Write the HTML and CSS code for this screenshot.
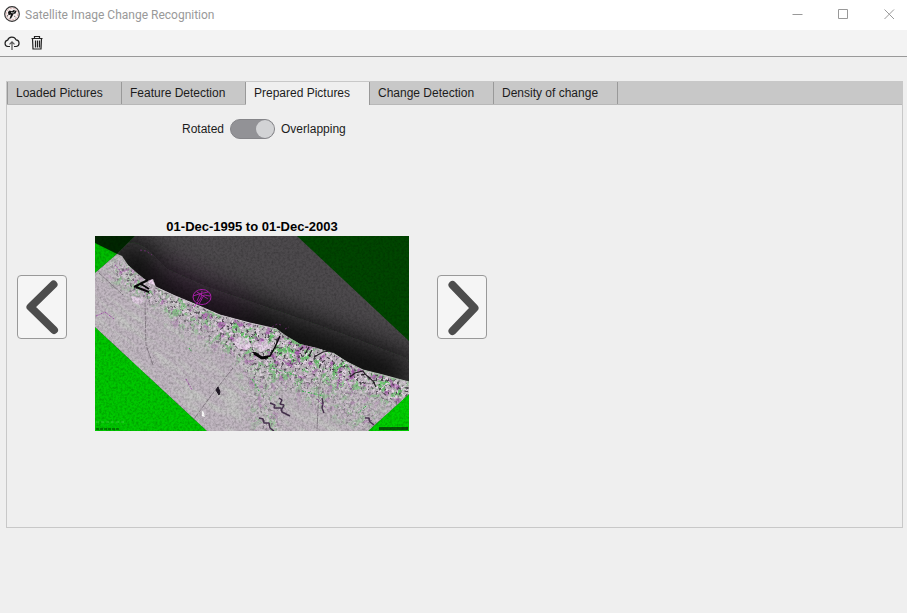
FILE: index.html
```html
<!DOCTYPE html>
<html lang="en">
<head>
<meta charset="utf-8">
<title>Satellite Image Change Recognition</title>
<link rel="stylesheet" href="styles.css">
</head>
<body>
<header class="titlebar">
  <svg class="app-icon" viewBox="0 0 16 16" aria-hidden="true">
    <circle cx="8" cy="8" r="7.3" fill="#f6eeee" stroke="#333" stroke-width="1.2"/>
    <circle cx="8" cy="8" r="5.8" fill="none" stroke="#d3a0a0" stroke-width=".8" stroke-dasharray="2 1.5"/>
    <path d="M4 6 5.500 4.500 8 5.200 9.500 4l3 1-1 2.500L9.500 8l-1 2L7 12.500l-1.500.3L7 8.500l-2.500.8z" fill="#151515"/>
    <path d="M7 6.5 9.500 7M10.500 5.500l-1 1.200" stroke="#fff" stroke-width=".7"/>
    <path d="m10 10 1.500 1M3.500 9v1.500" stroke="#777"/>
  </svg>
  <h1 class="app-title">Satellite Image Change Recognition</h1>
  <div class="window-controls">
    <button type="button" aria-label="Minimize"><svg viewBox="0 0 11 11"><path d="M.5 5.500h10"/></svg></button>
    <button type="button" aria-label="Maximize"><svg viewBox="0 0 11 11"><path d="M.5.5h9v9h-9z"/></svg></button>
    <button type="button" aria-label="Close"><svg viewBox="0 0 11 11"><path d="m.5.5 9.500 9.500M10 .5.500 10"/></svg></button>
  </div>
</header>

<div class="toolbar" role="toolbar">
  <button type="button" aria-label="Upload"><svg viewBox="0 0 16 16"><path d="M6 11.5H3.800A3.200 3.200 0 0 1 3.600 5.200 4.500 4.500 0 0 1 12 4.800a3.400 3.400 0 0 1 .4 6.700H10"/><path d="M8 15V7M5.500 9.400 8 6.900l2.500 2.500" stroke="#555"/></svg></button>
  <button type="button" aria-label="Delete"><svg viewBox="0 0 16 16"><path d="M2.500 3.500h11M5.500 3.500v-2h5v2M3.500 3.500l.5 10.500h8l.5-10.500M6.500 5.500v7M8.500 5.500v7M10.500 5.500v7"/></svg></button>
</div>

<main class="tab-panel">
  <nav class="tabs" role="tablist">
    <button type="button" role="tab">Loaded Pictures</button>
    <button type="button" role="tab">Feature Detection</button>
    <button type="button" role="tab" aria-selected="true">Prepared Pictures</button>
    <button type="button" role="tab">Change Detection</button>
    <button type="button" role="tab">Density of change</button>
  </nav>

  <section class="content">
    <div class="mode">
      <label for="overlap">Rotated</label>
      <input class="switch" id="overlap" type="checkbox" role="switch" checked>
      <label for="overlap">Overlapping</label>
    </div>

    <div class="viewer">
      <button class="step" type="button" aria-label="Previous"><svg viewBox="0 0 48 62"><path d="M35.500 8.500 12.500 31l23.500 23"/></svg></button>
      <figure class="picture">
        <figcaption>01-Dec-1995 to 01-Dec-2003</figcaption>
        <svg class="satellite" viewBox="0 0 314 195" role="img" aria-label="Overlay of two satellite images of a coast">
          <defs>
            <clipPath id="frame"><path d="M0 0h314v195H0z"/></clipPath>
            <clipPath id="sea"><path d="M40 0 22 18l5 2 6 9 9 8 10 8 9 6 17 8 24 10 23 10 30 8 27 6 8 6 15 9 17 4 16 5 14 9 16 8 20 5 26 7V105L202 0z"/></clipPath>
            <clipPath id="land"><path d="M0 37 22 18l5 2 6 9 9 8 10 8 6-2 3 8 17 8 24 10 23 10 30 8 27 6 8 6 15 9 17 4 16 5 14 9 16 8 20 5 26 7v12l-41 37H112L0 91z"/></clipPath>
            <filter id="soft" filterUnits="userSpaceOnUse" x="-80" y="-80" width="480" height="360"><feGaussianBlur stdDeviation="15"/></filter>
            <filter id="feather" filterUnits="userSpaceOnUse" x="-40" y="-40" width="400" height="280"><feGaussianBlur stdDeviation="7"/></filter>
            <filter id="grain" x="0" y="0" width="100%" height="100%" color-interpolation-filters="sRGB">
              <feTurbulence type="fractalNoise" baseFrequency=".43" numOctaves="3" seed="4"/>
              <feColorMatrix values="0 0 0 0 0 0 0 0 0 0 0 0 0 0 0 1.600 0 0 0 -.6"/>
            </filter>
            <filter id="streaks" x="0" y="0" width="100%" height="100%" color-interpolation-filters="sRGB">
              <feTurbulence type="fractalNoise" baseFrequency=".03 .13" numOctaves="4" seed="8"/>
              <feColorMatrix values="0 0 0 0 .8 0 0 0 0 .84 0 0 0 0 .79 3 0 0 0 -1.300"/>
            </filter>
            <filter id="dark-specks" x="0" y="0" width="100%" height="100%" color-interpolation-filters="sRGB">
              <feTurbulence type="fractalNoise" baseFrequency=".37" numOctaves="3" seed="12"/>
              <feColorMatrix values="0 0 0 0 .28 0 0 0 0 .25 0 0 0 0 .29 6 0 0 0 -3.400"/>
            </filter>
            <filter id="magenta-specks" x="0" y="0" width="100%" height="100%" color-interpolation-filters="sRGB">
              <feTurbulence type="fractalNoise" baseFrequency=".13" numOctaves="5" seed="21"/>
              <feColorMatrix values="0 0 0 0 .68 0 0 0 0 .38 0 0 0 0 .7 0 6 0 0 -3.500"/>
            </filter>
            <filter id="green-specks" x="0" y="0" width="100%" height="100%" color-interpolation-filters="sRGB">
              <feTurbulence type="fractalNoise" baseFrequency=".11" numOctaves="5" seed="33"/>
              <feColorMatrix values="0 0 0 0 .42 0 0 0 0 .78 0 0 0 0 .43 0 0 6 0 -2.900"/>
            </filter>
            <filter id="pale-specks" x="0" y="0" width="100%" height="100%" color-interpolation-filters="sRGB">
              <feTurbulence type="fractalNoise" baseFrequency=".31" numOctaves="3" seed="45"/>
              <feColorMatrix values="0 0 0 0 .93 0 0 0 0 .86 0 0 0 0 .93 6 0 0 0 -3"/>
            </filter>
            <mask id="town" maskUnits="userSpaceOnUse" x="0" y="0" width="314" height="195">
              <g fill="none" stroke="#fff" stroke-linecap="round" filter="url(#feather)">
                <path d="M25 35 50 54l52 22 35 16" stroke-width="18" stroke-opacity=".8"/>
                <path d="m135 92 35 10 40 16 50 20 50 18" stroke-width="28"/>
                <path d="m145 105 20 22 55 10" stroke-width="24" stroke-opacity=".6"/>
                <path d="m160 130 15 62M175 130l100 55M85 80l60 30" stroke-width="28" stroke-opacity=".4"/>
              </g>
            </mask>
          </defs>
          <g clip-path="url(#frame)">
            <path d="M0 0h314v195H0z" fill="#004600"/>
            <path d="M0 0h40L22 18 0 7z" fill="#002600"/>
            <path d="m0 7 22 11L0 37z" fill="#00bd00"/>
            <path d="M0 91v104h112z" fill="#00c800"/>
            <path d="M314 158v37h-41z" fill="#00d000"/>
            <path d="M284 191h29v3h-29z" fill="#075807"/>
            <g clip-path="url(#sea)">
              <path d="M0 0h314v195H0z" fill="#4d4a4d"/>
              <path d="m20 12 40 39 42 19 53 18 35 12 50 18 74 28" fill="none" stroke="#080b08" stroke-width="44" filter="url(#soft)"/>
              <path d="m65 35 85 45" stroke="#6b1b6a" stroke-width="16" opacity=".3" filter="url(#soft)"/>
            </g>
            <g clip-path="url(#land)">
              <path d="M0 0h314v195H0z" fill="#c1b7c1"/>
              <path d="M-100-150h550v500h-550z" filter="url(#streaks)" opacity=".5" transform="rotate(37 157 98)"/>
              <g mask="url(#town)">
                <path d="M0 0h314v195H0z" filter="url(#green-specks)"/>
                <path d="M0 0h314v195H0z" filter="url(#pale-specks)"/>
                <path d="M0 0h314v195H0z" filter="url(#magenta-specks)"/>
                <path d="M0 0h314v195H0z" filter="url(#dark-specks)"/>
              </g>
              <g fill="#f1d8f2"><path d="m139 105 7-5 7 3 4 7-6 4-9-2zM36 60l8 1 5 4-5 4-6-3zM159 108l12-4 4 8-10 4z" opacity=".7"/><path d="m53 47 4-4 3 6z"/><path d="m107 176 1-2 2 7-3-1z" fill="#fff"/></g>
              <path d="m138 132-23 29-16 22M50 67l1 42 7 20M230 125l-6 26-2 44M4 37l24 22" fill="none" stroke="#756c76" stroke-width=".7" stroke-dasharray="4 1 7 1"/>
              <path d="m121 154 2-3 2 5-1 3z" fill="#221a27" stroke="#221a27"/>
              <g fill="none" stroke="#493451" stroke-width="1.500" stroke-linejoin="bevel"><path d="m175 167 5 2-1 3 7 0 1 4 8 4M184 162l3 2-2 4 4 1-3 6M164 182l4 1 1 4 5 0 1 5 4 3M227 162l1 5-1 5 2 5M270 182l4 0 1 4 4 3"/></g>
              <g fill="none" stroke="#a954b2" stroke-width="1" stroke-dasharray="2 1 1 1"><path d="m20 29 7 8M91 143l6 11M245 138l-3 15M251 143l7 14M188 124l10 8M222 163l9 9M1 80l9-4 9 7M246 138v15"/></g>
              <path d="m207 155 21 5M178 132l24 8M157 143l7 12M288 139l3 8M271 170l-9 8M94 112l3 4" stroke="#31b742" stroke-dasharray="2 1 1 2"/>
            </g>
            <path d="M61 51l17 8 24 10 23 10 30 8 27 6" fill="none" stroke="#ded6de" stroke-width=".9"/>
            <path d="m238 117 14 9 16 8 20 5 26 7" fill="none" stroke="#bdc7bd"/>
            <path d="m39 51 14-7M41 51l13 5M46 48l8 5" fill="none" stroke="#080808" stroke-width="2"/>
            <path d="m158 116 8 6 9-2 5-9 5-11" fill="none" stroke="#080808" stroke-width="1.500"/>
            <path d="m159 117 8 5 6-1" fill="none" stroke="#080808" stroke-width="3"/>
            <path d="m205 114 3-3m2 7 4-7m0 9 3-6m2 7 9-5 7-1M255 141l5-4 8-2 2 3-4 1m4-1 8 7 3 6" fill="none" stroke="#272127" stroke-width="1.200"/>
            <g fill="none" stroke="#b321b4"><ellipse cx="107" cy="61" rx="9" ry="7.500"/><path d="m98 60 6-2 9-2M107 55l-1 7-7 9M102 56l11 7M104 68l5-9 6 1M102 65l3-7" stroke-width=".9"/></g>
            <path d="m45 14 6 1 6 4M177 91l5-3 4 1m4 4 4-2" fill="none" stroke="#682e6b" stroke-dasharray="2 2"/>
            <path d="M1 186h30" stroke="#35d535" stroke-dasharray="3 2"/><path d="M1 193h24" stroke="#003400" stroke-dasharray="3 1"/>
            <path d="M0 0h314v195H0z" filter="url(#grain)" opacity=".26"/>
          </g>
        </svg>
      </figure>
      <button class="step" type="button" aria-label="Next"><svg viewBox="0 0 48 62"><path d="m14.500 9 22 23-22 23"/></svg></button>
    </div>
  </section>
</main>
</body>
</html>
```
FILE: styles.css
```css
* { box-sizing: border-box; }

body {
  margin: 0;
  min-height: 100vh;
  background: #efefef;
  color: #1c1c1c;
  font: 12px/16px "Liberation Sans", Arial, sans-serif;
}

button {
  padding: 0;
  border: 0;
  background: none;
  color: inherit;
  font: inherit;
}

svg { display: block; }

.titlebar {
  display: flex;
  align-items: center;
  height: 30px;
  padding-left: 4px;
  background: #fff;
}

.app-icon {
  width: 16px;
  height: 16px;
  margin-bottom: 2px;
}

.app-title {
  flex: 1;
  margin: 0 0 0 5px;
  color: #999;
  font: 400 12px/16px Roboto, "Noto Sans", sans-serif;
}

.window-controls { display: flex; align-self: stretch; }

.window-controls button {
  display: grid;
  place-items: center;
  width: 46px;
  padding: 0 0 2px 10px;
}

.window-controls svg {
  width: 11px;
  height: 11px;
  fill: none;
  stroke: #999;
}

.toolbar {
  display: flex;
  align-items: center;
  gap: 9px;
  height: 27px;
  padding-left: 4px;
  border-bottom: 1px solid #999;
  background: #f3f3f3;
}

.toolbar svg {
  width: 16px;
  height: 16px;
  fill: none;
  stroke: #222;
  stroke-width: 1.2;
}

.tab-panel {
  margin: 24px 4px 0 6px;
  border: 1px solid #c8c8c8;
}

.tabs {
  display: flex;
  height: 23px;
  border-bottom: 1px solid #b8b8b8;
  background: #c8c8c8;
}

.tabs button {
  width: 124px;
  padding-left: 8px;
  border-right: 1px solid #999;
  text-align: left;
}

.tabs button:first-child {
  width: 115px;
  border-left: 1px solid #999;
}

.tabs button[aria-selected] {
  height: 23px;
  padding-bottom: 1px;
  background: #efefef;
}

.content { padding: 14px 10px 96px; }

.mode {
  display: flex;
  align-items: center;
  gap: 6px;
  height: 20px;
  padding-left: 165px;
}

.switch {
  display: flex;
  align-items: center;
  justify-content: flex-end;
  appearance: none;
  width: 45px;
  height: 20px;
  margin: 0;
  border: 1px solid #858589;
  border-radius: 10px;
  background: #929296;
}

.switch::before {
  content: "";
  width: 18px;
  height: 18px;
  border-radius: 50%;
  background: #d2d3d5;
}

.viewer {
  display: flex;
  align-items: flex-start;
  gap: 28px;
  margin-top: 80px;
}

.picture { margin: 0; }

.picture figcaption {
  padding-bottom: 1px;
  color: #000;
  font-size: 13px;
  font-weight: 700;
  text-align: center;
}

.satellite { width: 314px; height: 195px; }

.step {
  width: 50px;
  height: 64px;
  margin-top: 56px;
  border: 1px solid #999;
  border-radius: 4px;
  background: #f5f5f5;
}

.step svg {
  width: 48px;
  height: 62px;
  fill: none;
  stroke: #4d4d4d;
  stroke-width: 8;
  stroke-linecap: round;
  stroke-linejoin: round;
}
```
